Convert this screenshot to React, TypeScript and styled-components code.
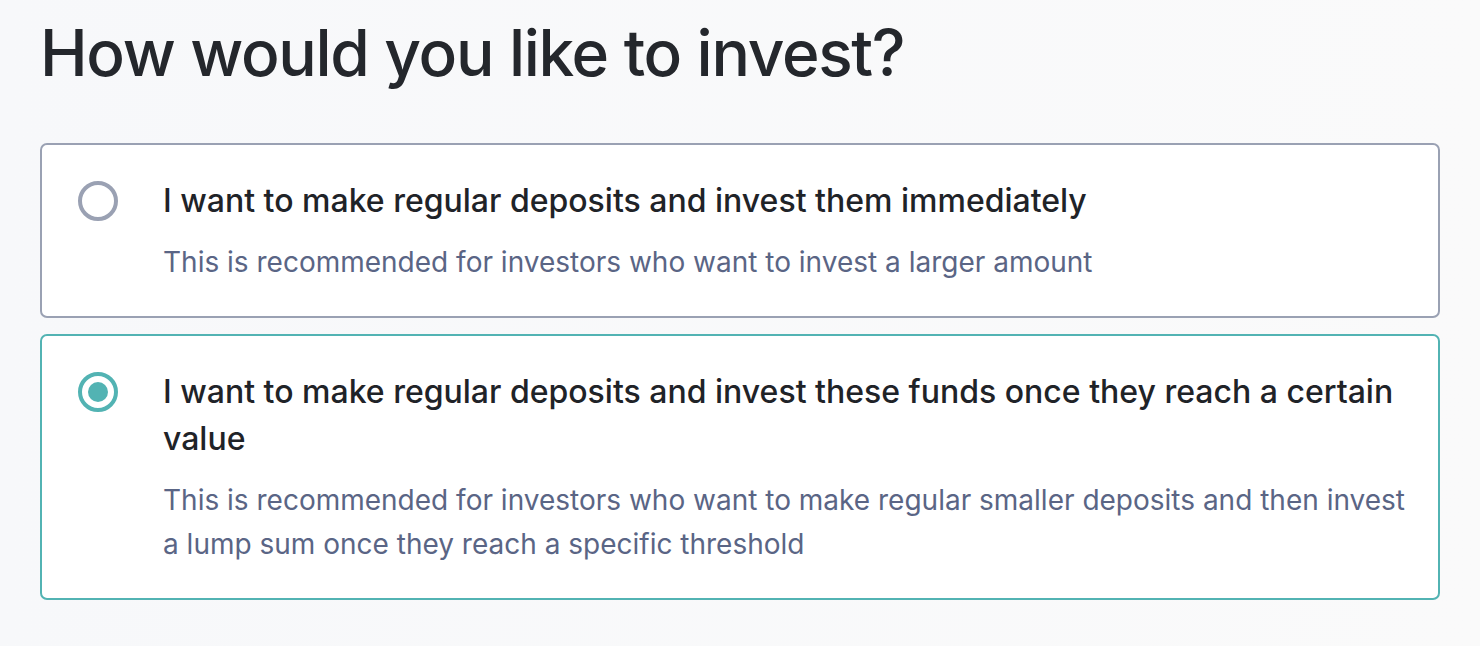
import React, { useState } from "react";
import styled, { createGlobalStyle } from "styled-components";

const Global = createGlobalStyle`
  html, body { margin: 0; padding: 0; }
  body {
    font-family: Inter, "Noto Sans", sans-serif;
    background: linear-gradient(90deg, #f7f8fa 0%, #fafafa 100%);
    min-height: 646px;
  }
`;

const Page = styled.div`
  padding: 13px 40px 0 40px;
  display: flex;
  flex-direction: column;
`;

const Heading = styled.h1`
  margin: 0 0 50px 0;
  font-size: 64px;
  line-height: 80px;
  font-weight: 500;
  color: #24272c;
  letter-spacing: -1.3px;
`;

const Options = styled.div`
  display: flex;
  flex-direction: column;
  gap: 16px;
`;

const Card = styled.label<{ $selected: boolean }>`
  display: flex;
  align-items: flex-start;
  gap: 45px;
  background: #ffffff;
  border: 2px solid ${(p) => (p.$selected ? "#52b3b3" : "#9aa1b3")};
  border-radius: 7px;
  padding: 32px 28px 32px 36px;
  cursor: pointer;
`;

const Radio = styled.span<{ $selected: boolean }>`
  flex: 0 0 auto;
  width: 40px;
  height: 40px;
  box-sizing: border-box;
  border-radius: 50%;
  border: 4px solid ${(p) => (p.$selected ? "#52b3b3" : "#9aa1b3")};
  display: flex;
  align-items: center;
  justify-content: center;
  margin-top: 4px;
  &::after {
    content: "";
    width: 20px;
    height: 20px;
    border-radius: 50%;
    background: #52b3b3;
    display: ${(p) => (p.$selected ? "block" : "none")};
  }
`;

const Texts = styled.div`
  display: flex;
  flex-direction: column;
  gap: 16px;
`;

const Title = styled.div`
  font-size: 32px;
  line-height: 47px;
  font-weight: 500;
  color: #1f2328;
`;

const Desc = styled.div`
  font-size: 28px;
  line-height: 44px;
  font-weight: 400;
  color: #5a6585;
`;

const options = [
  {
    id: "immediate",
    title: "I want to make regular deposits and invest them immediately",
    desc: "This is recommended for investors who want to invest a larger amount",
  },
  {
    id: "threshold",
    title:
      "I want to make regular deposits and invest these funds once they reach a certain value",
    desc: "This is recommended for investors who want to make regular smaller deposits and then invest a lump sum once they reach a specific threshold",
  },
];

export default function App() {
  const [sel, setSel] = useState("threshold");
  return (
    <>
      <Global />
      <Page>
        <Heading>How would you like to invest?</Heading>
        <Options>
          {options.map((o) => (
            <Card key={o.id} $selected={sel === o.id} onClick={() => setSel(o.id)}>
              <Radio $selected={sel === o.id} />
              <Texts>
                <Title>{o.title}</Title>
                <Desc>{o.desc}</Desc>
              </Texts>
            </Card>
          ))}
        </Options>
      </Page>
    </>
  );
}
